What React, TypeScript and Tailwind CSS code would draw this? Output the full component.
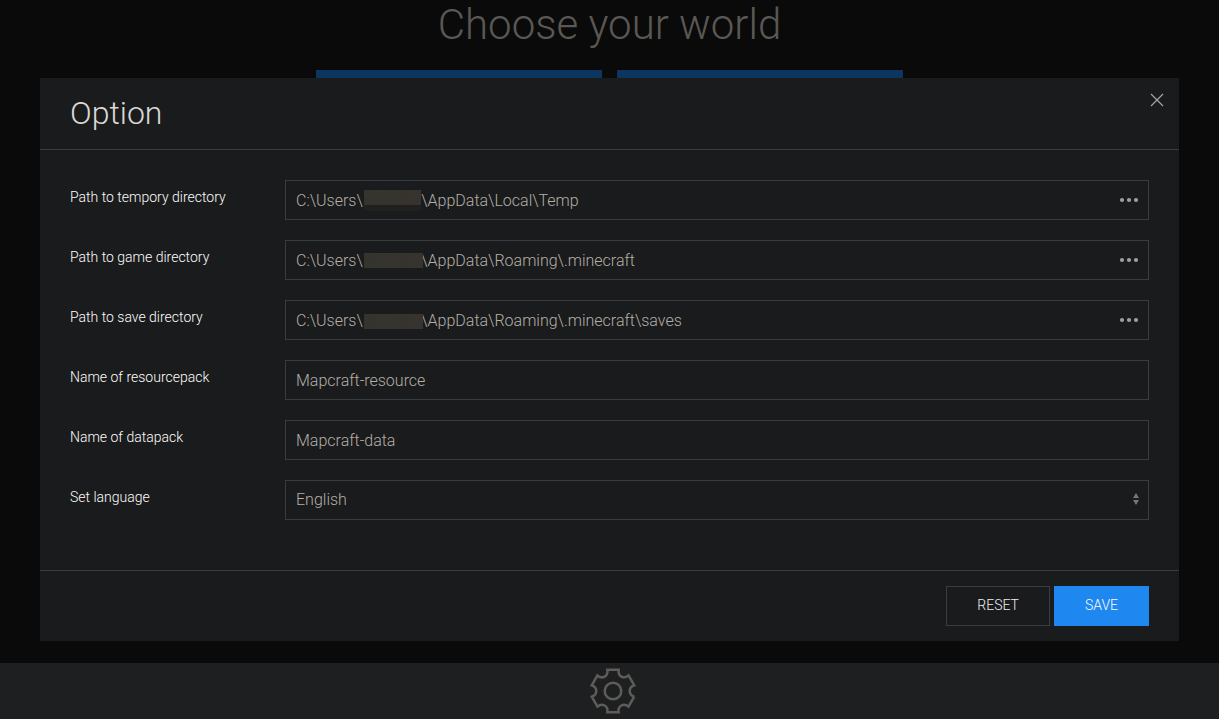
import { useState } from "react";

const GAP = "\u00a0".repeat(15);

type PathField = { id: string; label: string; value: string; mask: string };

const pathFields: PathField[] = [
  {
    id: "temp",
    label: "Path to tempory directory",
    value: `C:\\Users\\${GAP}\\AppData\\Local\\Temp`,
    mask: "top-[10px] w-[57px] h-[15px] shadow-[0_6px_0_#20211f]",
  },
  {
    id: "game",
    label: "Path to game directory",
    value: `C:\\Users\\${GAP}\\AppData\\Roaming\\.minecraft`,
    mask: "top-[13px] w-[59px] h-[15px]",
  },
  {
    id: "save",
    label: "Path to save directory",
    value: `C:\\Users\\${GAP}\\AppData\\Roaming\\.minecraft\\saves`,
    mask: "top-[14px] w-[59px] h-[15px]",
  },
];

const nameFields = [
  { id: "resourcepack", label: "Name of resourcepack", value: "Mapcraft-resource" },
  { id: "datapack", label: "Name of datapack", value: "Mapcraft-data" },
];

const control =
  "block h-10 w-full appearance-none rounded-none border border-[#393d3f] bg-transparent px-[10px] text-base font-light text-[#b5afa5] outline-none";

function Row({ id, label, children }: { id: string; label: string; children: React.ReactNode }) {
  return (
    <div className="flex items-start">
      <label htmlFor={id} className="mt-[7px] w-[215px] shrink-0 text-sm leading-5 font-light text-[#fffdfa]">
        {label}
      </label>
      <div className="relative min-w-0 flex-1">{children}</div>
    </div>
  );
}

function CogIcon() {
  return (
    <svg width="50" height="50" viewBox="0 0 20 20" fill="none" stroke="currentColor" aria-hidden="true">
      <circle cx="9.997" cy="10" r="3.31" />
      <path d="M18.488,12.285 L16.205,16.237 C15.322,15.496 14.185,15.281 13.303,15.791 C12.428,16.289 12.047,17.373 12.246,18.5 L7.735,18.5 C7.938,17.374 7.553,16.299 6.684,15.791 C5.801,15.27 4.655,15.492 3.773,16.237 L1.5,12.285 C2.573,11.871 3.317,10.999 3.317,9.991 C3.305,8.98 2.573,8.121 1.5,7.716 L3.765,3.784 C4.645,4.516 5.794,4.738 6.687,4.232 C7.555,3.722 7.939,2.637 7.735,1.5 L12.263,1.5 C12.072,2.637 12.441,3.71 13.314,4.22 C14.206,4.73 15.343,4.516 16.225,3.794 L18.487,7.714 C17.404,8.117 16.661,8.988 16.67,10.009 C16.672,11.018 17.415,11.88 18.488,12.285" />
    </svg>
  );
}

function OptionDialog() {
  const [language, setLanguage] = useState("English");
  return (
    <div role="dialog" aria-labelledby="option-title" className="relative w-full bg-[#1a1b1d]">
      <button type="button" aria-label="Close" className="absolute top-[15px] right-[15px] text-[#a8a8a8]">
        <svg width="14" height="14" viewBox="0 0 14 14" fill="none" stroke="currentColor" strokeWidth="1.1" aria-hidden="true">
          <line x1="1" y1="1" x2="13" y2="13" />
          <line x1="13" y1="1" x2="1" y2="13" />
        </svg>
      </button>
      <header className="border-b border-[#393d3f] px-[30px] py-[15px]">
        <h2 id="option-title" className="text-[32px] leading-[41px] font-light text-[#dad8d4]">
          Option
        </h2>
      </header>
      <form className="flex flex-col gap-5 px-[30px] pt-[30px] pb-[50px]">
        {pathFields.map((f) => (
          <Row key={f.id} id={f.id} label={f.label}>
            <input id={f.id} type="text" defaultValue={f.value} className={control} />
            <span className={`absolute left-[79px] bg-linear-to-r from-[#34342e] to-[#37332f] ${f.mask}`} />
            <button type="button" aria-label="Browse" className="absolute inset-y-0 right-0 flex w-10 items-center justify-center text-[#a0a0a0]">
              <svg width="20" height="20" viewBox="0 0 20 20" fill="currentColor" aria-hidden="true">
                <circle cx="3" cy="10" r="2.1" />
                <circle cx="10" cy="10" r="2.1" />
                <circle cx="17" cy="10" r="2.1" />
              </svg>
            </button>
          </Row>
        ))}
        {nameFields.map((f) => (
          <Row key={f.id} id={f.id} label={f.label}>
            <input id={f.id} type="text" defaultValue={f.value} className={control} />
          </Row>
        ))}
        <Row id="language" label="Set language">
          <select id="language" value={language} onChange={(e) => setLanguage(e.target.value)} className={control}>
            <option>English</option>
          </select>
          <svg width="24" height="16" viewBox="0 0 24 16" fill="#777" className="pointer-events-none absolute top-3 right-0" aria-hidden="true">
            <polygon points="11 1 8 6 14 6" />
            <polygon points="11 13 8 8 14 8" />
          </svg>
        </Row>
      </form>
      <footer className="flex justify-end gap-1 border-t border-[#393d3f] px-[30px] py-[15px] text-sm font-light">
        <button type="button" className="h-10 border border-[#393d3f] px-[30px] pb-0.5 text-[#f0eeea]">
          RESET
        </button>
        <button type="button" className="h-10 bg-[#1e87f0] px-[31px] pb-0.5 text-[#fffdfa]">
          SAVE
        </button>
      </footer>
    </div>
  );
}

export default function App() {
  return (
    <div className="flex min-h-screen flex-col bg-[#0a0a0a] font-[Roboto,'Liberation_Sans',sans-serif]">
      <main className="flex-1">
        <h1 className="text-center text-[42px] leading-[50px] font-light text-[#5a5854]">Choose your world</h1>
        <div className="mx-auto mt-5 grid w-[587px] grid-cols-2 gap-[15px]">
          <div className="h-40 bg-[#0c3660]" />
          <div className="h-40 bg-[#0c3660]" />
        </div>
      </main>
      <footer className="flex h-14 items-center justify-center bg-[#1e1f21] pl-[6px]">
        <button type="button" aria-label="Options" className="text-[#5e5c59]">
          <CogIcon />
        </button>
      </footer>
      <div className="fixed inset-x-0 top-0 flex justify-center px-10 pt-[78px]">
        <OptionDialog />
      </div>
    </div>
  );
}
